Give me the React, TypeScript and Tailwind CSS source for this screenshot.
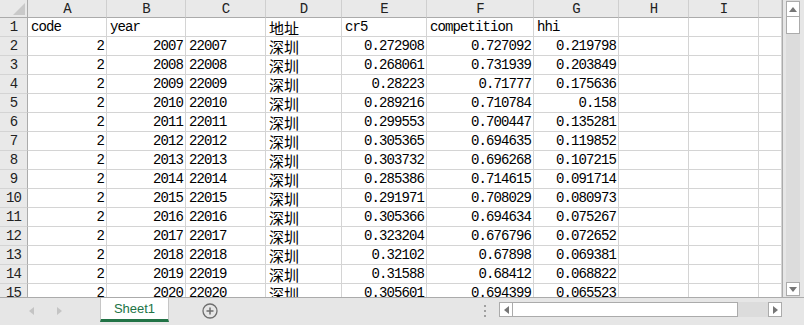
import React from 'react';

type Cell = { v: string; right?: boolean; cjk?: boolean };

const colLetters = ['A', 'B', 'C', 'D', 'E', 'F', 'G', 'H', 'I', ''];

const data: [string, string, string, string, string][] = [
  ['2007', '22007', '0.272908', '0.727092', '0.219798'],
  ['2008', '22008', '0.268061', '0.731939', '0.203849'],
  ['2009', '22009', '0.28223', '0.71777', '0.175636'],
  ['2010', '22010', '0.289216', '0.710784', '0.158'],
  ['2011', '22011', '0.299553', '0.700447', '0.135281'],
  ['2012', '22012', '0.305365', '0.694635', '0.119852'],
  ['2013', '22013', '0.303732', '0.696268', '0.107215'],
  ['2014', '22014', '0.285386', '0.714615', '0.091714'],
  ['2015', '22015', '0.291971', '0.708029', '0.080973'],
  ['2016', '22016', '0.305366', '0.694634', '0.075267'],
  ['2017', '22017', '0.323204', '0.676796', '0.072652'],
  ['2018', '22018', '0.32102', '0.67898', '0.069381'],
  ['2019', '22019', '0.31588', '0.68412', '0.068822'],
  ['2020', '22020', '0.305601', '0.694399', '0.065523'],
];

const empty: Cell = { v: '' };

const rows: Cell[][] = [
  [{ v: 'code' }, { v: 'year' }, empty, { v: '地址', cjk: true }, { v: 'cr5' }, { v: 'competition' }, { v: 'hhi' }, empty, empty, empty],
  ...data.map(([y, c, e, f, g]) => [
    { v: '2', right: true },
    { v: y, right: true },
    { v: c },
    { v: '深圳', cjk: true },
    { v: e, right: true },
    { v: f, right: true },
    { v: g, right: true },
    empty,
    empty,
    empty,
  ]),
];

const mono = "font-['Liberation_Mono',monospace] text-[14px] tracking-[-0.9px]";

const DataCell = ({ cell }: { cell: Cell }) => (
  <div
    className={`h-[19px] overflow-hidden whitespace-nowrap border-r border-b border-[#d4d4d4] bg-white flex items-center text-black ${
      cell.right ? 'justify-end pr-[2px]' : 'justify-start pl-[3px]'
    }`}
  >
    <span
      className={
        cell.cjk
          ? "font-['Noto_Sans_CJK_SC',sans-serif] text-[15px] leading-none"
          : `${mono} leading-none`
      }
    >
      {cell.v}
    </span>
  </div>
);

const Tri = ({ dir, color }: { dir: 'up' | 'down' | 'left' | 'right'; color: string }) => {
  const pts = {
    up: '0,5 4,0 8,5',
    down: '0,0 8,0 4,5',
    left: '5,0 5,8 0,4',
    right: '0,0 5,4 0,8',
  }[dir];
  const vertical = dir === 'up' || dir === 'down';
  return (
    <svg width={vertical ? 8 : 5} height={vertical ? 5 : 8} viewBox={vertical ? '0 0 8 5' : '0 0 5 8'}>
      <polygon points={pts} fill={color} />
    </svg>
  );
};

export default function App() {
  return (
    <div className="w-[804px] h-[325px] overflow-hidden bg-white flex flex-col select-none">
      <div className="h-[297px] flex">
        {/* sheet grid */}
        <div className="w-[782px] overflow-hidden">
          <div className="grid grid-cols-[28px_79px_79px_80px_76px_85px_107px_85px_70px_70px_1fr]">
            <div className="h-[18px] bg-[#e9e9e9] border-r border-b border-r-[#ababab] border-b-[#ababab] flex items-end justify-end pr-[2px] pb-[2px]">
              <svg width="12" height="12" viewBox="0 0 12 12">
                <polygon points="12,0 12,12 0,12" fill="#c9c9c9" />
              </svg>
            </div>
            {colLetters.map((l, i) => (
              <div
                key={i}
                className={`h-[18px] bg-[#e9e9e9] border-r border-b border-r-[#cfcfcf] border-b-[#ababab] text-center leading-[18px] text-[#222] ${mono}`}
              >
                {l}
              </div>
            ))}
            {rows.map((r, ri) => (
              <React.Fragment key={ri}>
                <div
                  className={`h-[19px] bg-[#e9e9e9] border-r border-b border-r-[#ababab] border-b-[#d4d4d4] text-center leading-[19px] text-[#222] ${mono}`}
                >
                  {ri + 1}
                </div>
                {r.map((c, ci) => (
                  <DataCell key={ci} cell={c} />
                ))}
              </React.Fragment>
            ))}
          </div>
        </div>
        {/* vertical scrollbar */}
        <div className="w-[22px] bg-[#e6e6e6] border-l border-[#ababab] flex pl-[3px] pr-[4px]">
          <div className="flex-1 bg-[#dcdcdc] flex flex-col pt-[1px] pb-[1px]">
            <div className="h-[16px] bg-white border border-[#ababab] flex items-center justify-center">
              <Tri dir="up" color="#767676" />
            </div>
            <div className="h-[17px] bg-white border border-t-0 border-[#ababab]" />
            <div className="flex-1" />
            <div className="h-[14px] bg-white border border-[#ababab] flex items-center justify-center">
              <Tri dir="down" color="#767676" />
            </div>
          </div>
        </div>
      </div>

      {/* sheet tab bar */}
      <div className="h-[28px] bg-[#e6e6e6] border-t border-[#ababab] flex items-start">
        <div className="w-[100px] h-[26px] flex items-center pl-[29px] gap-[23px]">
          <Tri dir="left" color="#c4c4c4" />
          <Tri dir="right" color="#c4c4c4" />
        </div>
        <div className="w-[69px] h-[24px] bg-white border-x border-[#c6c6c6] border-b-[3px] border-b-[#217346] flex items-center justify-center font-['Liberation_Sans',Arial,sans-serif] text-[13px] text-[#217346]">
          Sheet1
        </div>
        <div className="ml-[33px] h-[26px] flex items-center">
          <svg width="16" height="16" viewBox="0 0 16 16">
            <circle cx="8" cy="8" r="7" fill="none" stroke="#6e6e6e" strokeWidth="1.3" />
            <path d="M8 4.5v7M4.5 8h7" stroke="#6e6e6e" strokeWidth="1.5" />
          </svg>
        </div>
        <div className="flex-1" />
        <div className="h-[26px] flex flex-col items-center justify-center gap-[3px] mr-[13px]">
          <div className="w-[2px] h-[2px] bg-[#a0a0a0]" />
          <div className="w-[2px] h-[2px] bg-[#a0a0a0]" />
          <div className="w-[2px] h-[2px] bg-[#a0a0a0]" />
        </div>
        <div className="w-[283px] h-[15px] mt-[4px] flex bg-[#dcdcdc]">
          <div className="w-[14px] bg-white border border-[#ababab] flex items-center justify-center">
            <Tri dir="left" color="#767676" />
          </div>
          <div className="w-[225px] bg-white border border-l-0 border-[#ababab]" />
          <div className="flex-1" />
          <div className="w-[14px] bg-white border border-[#ababab] flex items-center justify-center">
            <Tri dir="right" color="#767676" />
          </div>
        </div>
        <div className="w-[22px]" />
      </div>
    </div>
  );
}
